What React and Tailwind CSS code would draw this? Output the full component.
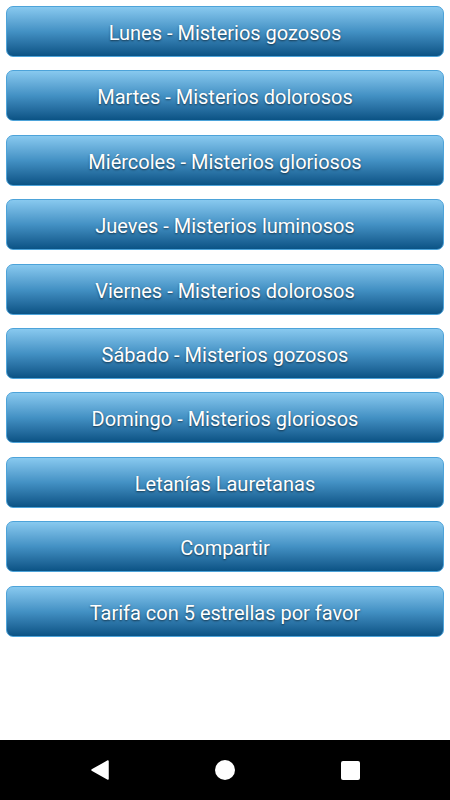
const items = [
  'Lunes - Misterios gozosos',
  'Martes - Misterios dolorosos',
  'Miércoles - Misterios gloriosos',
  'Jueves - Misterios luminosos',
  'Viernes - Misterios dolorosos',
  'Sábado - Misterios gozosos',
  'Domingo - Misterios gloriosos',
  'Letanías Lauretanas',
  'Compartir',
  'Tarifa con 5 estrellas por favor',
];

export default function App() {
  return (
    <div className="flex h-[800px] w-[450px] flex-col bg-white font-['Roboto',sans-serif]">
      <div className="flex flex-1 flex-col gap-[13.4px] px-[6px] pt-[6px]">
        {items.map((label) => (
          <button
            key={label}
            className="flex h-[51px] w-full items-center justify-center rounded-[7px] border border-[#4da3d9] bg-gradient-to-b from-[#88c9ef] via-[#4391c4] to-[#0a5385] pt-[3px] text-[20px] text-white [text-shadow:0_1px_2px_rgba(0,0,0,0.55)]"
          >
            {label}
          </button>
        ))}
      </div>
      <div className="flex h-[60px] items-center justify-center bg-black">
        <div className="flex w-[125px] justify-center">
          <svg width="18" height="20" viewBox="0 0 18 20">
            <path d="M17 1 L17 19 L1 10 Z" fill="white" stroke="white" strokeWidth="1.5" strokeLinejoin="round" />
          </svg>
        </div>
        <div className="flex w-[125px] justify-center">
          <div className="h-[20px] w-[20px] rounded-full bg-white" />
        </div>
        <div className="flex w-[125px] justify-center">
          <div className="h-[19px] w-[19px] rounded-[2px] bg-white" />
        </div>
      </div>
    </div>
  );
}
